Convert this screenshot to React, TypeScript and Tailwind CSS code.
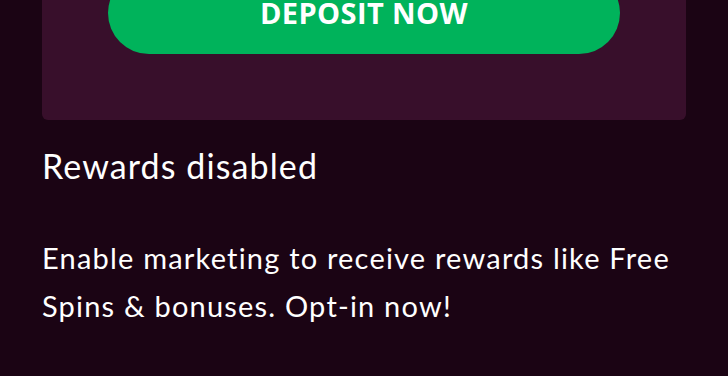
export default function App() {
  return (
    <div className="min-h-screen bg-[#1b0414] px-[42px] font-['Lato',sans-serif] text-white">
      {/* Deposit card */}
      <div className="flex flex-col rounded-b-[6px] bg-[#380f2b] px-[66px] pb-[66px]">
        <button className="-mt-[28px] flex h-[82px] items-center justify-center rounded-[41px] bg-[#00b35b] font-['Open_Sans',sans-serif] text-[29px] font-bold tracking-[0.4px] text-white">
          DEPOSIT NOW
        </button>
      </div>

      <h2 className="mt-[26px] text-[34px] leading-[40px] font-normal tracking-[1.1px]">Rewards disabled</h2>

      <p className="mt-[48px] text-[29px] leading-[48px] tracking-[1.2px]">
        Enable marketing to receive rewards like Free Spins &amp; bonuses. Opt-in now!
      </p>
    </div>
  );
}
